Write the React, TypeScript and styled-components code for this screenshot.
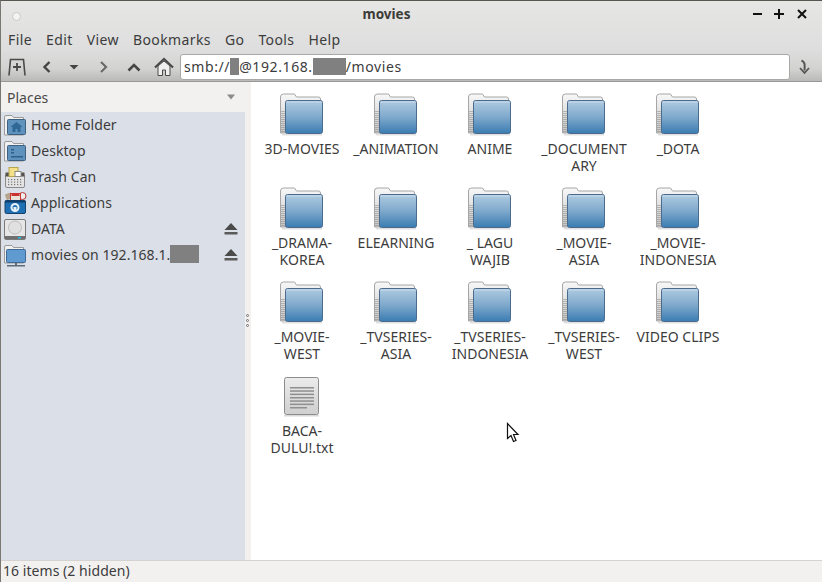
import React from "react";
import styled, { createGlobalStyle } from "styled-components";

const GlobalStyle = createGlobalStyle`
  html, body { margin: 0; padding: 0; height: 100%; background: #fff; }
  body { font-family: "Noto Sans", "Open Sans", "DejaVu Sans", sans-serif; color: #3c3c3c; overflow: hidden; }
`;

const Window = styled.div`
  position: relative;
  width: 822px;
  height: 582px;
  display: flex;
  flex-direction: column;
  box-sizing: border-box;
  border-top: 1px solid #5a5753;
  border-left: 1px solid #7a7773;
  overflow: hidden;
  background: #f2f1f0;
`;

const Chrome = styled.div`
  height: 81px;
  flex: none;
  box-sizing: border-box;
  display: flex;
  flex-direction: column;
  background: linear-gradient(#e6e6e5 0%, #dedede 60%, #d2d2d1 85%, #b9b9b8 100%);
  border-bottom: 1px solid #9a9997;
`;

const TitleBar = styled.div`
  height: 26px;
  display: flex;
  align-items: center;
  padding: 0 14px 0 11px;
`;

const CloseDot = styled.div`
  width: 7px;
  height: 7px;
  border-radius: 50%;
  background: #f4f4f4;
  border: 1px solid #c9c9c9;
  margin-top: 5px;
`;

const Title = styled.div`
  flex: 1;
  text-align: center;
  font-size: 13.5px;
  font-weight: 700;
  color: #3c3b37;
`;

const WindowButtons = styled.div`
  display: flex;
  gap: 10px;
  align-items: center;
`;

const MenuBar = styled.nav`
  height: 25px;
  display: flex;
  align-items: center;
  padding-left: 7px;
  gap: 14px;
  font-size: 14px;
`;

const MenuItem = styled.span`
  color: #3c3c3c;
  letter-spacing: 0.4px;
`;

const Toolbar = styled.div`
  height: 29px;
  display: flex;
  align-items: center;
  padding-left: 6px;
`;

const ToolSlot = styled.div<{ $w: number; $ml?: number }>`
  width: ${(p) => p.$w}px;
  margin-left: ${(p) => p.$ml ?? 0}px;
  flex: none;
  display: flex;
  justify-content: center;
  align-items: center;
`;

const Address = styled.div`
  width: 610px;
  height: 26px;
  flex: none;
  box-sizing: border-box;
  margin-left: 1px;
  background: #fff;
  border: 1px solid #a8a8a6;
  border-radius: 3px;
  display: flex;
  align-items: center;
  padding-left: 3px;
  font-size: 14px;
  color: #3c3c3c;
  letter-spacing: 0.6px;
  white-space: pre;
`;

const Redacted = styled.span<{ $w: number; $h: number }>`
  display: inline-block;
  width: ${(p) => p.$w}px;
  height: ${(p) => p.$h}px;
  background: #808080;
  flex: none;
`;

const Body = styled.div`
  flex: 1;
  min-height: 0;
  display: flex;
`;

const Side = styled.aside`
  width: 244px;
  flex: none;
  display: flex;
  flex-direction: column;
  background: #f2f1f0;
`;

const PlacesHead = styled.div`
  height: 30px;
  flex: none;
  box-sizing: border-box;
  display: flex;
  align-items: center;
  justify-content: space-between;
  padding: 0 9px 0 6px;
  font-size: 14px;
  color: #4a4a4a;
`;

const PlacesList = styled.ul`
  flex: 1;
  margin: 0;
  padding: 0;
  list-style: none;
  background: #dbdfe7;
`;

const PlaceRow = styled.li`
  height: 26px;
  box-sizing: border-box;
  display: flex;
  align-items: center;
  font-size: 14px;
  color: #3c3c3c;
  padding: 0 6px 0 3px;
  white-space: nowrap;
  letter-spacing: 0.05px;
`;

const PlaceIcon = styled.span`
  width: 24px;
  height: 24px;
  flex: none;
  margin-right: 3px;
`;

const PlaceLabel = styled.span`
  flex: 1;
  display: flex;
  align-items: center;
  margin-top: -2px;
`;

const Handle = styled.div`
  width: 6px;
  flex: none;
  box-sizing: border-box;
  background: #f2f1f0;
  display: flex;
  flex-direction: column;
  justify-content: center;
  align-items: flex-start;
  gap: 2px;
  padding: 0 0 2px 1px;
`;

const HandleDot = styled.span`
  width: 3px;
  height: 3px;
  border-radius: 50%;
  background: #f2f1f0;
  border: 0.5px solid #6f6f6f;
  box-sizing: border-box;
`;

const Files = styled.main`
  flex: 1;
  background: #fff;
  display: grid;
  grid-template-columns: repeat(5, 94px);
  grid-auto-rows: 94px;
  align-content: start;
  padding: 9px 0 0 4px;
`;

const Cell = styled.div`
  display: flex;
  flex-direction: column;
  align-items: center;
`;

const CellIcon = styled.div`
  width: 48px;
  height: 48px;
  flex: none;
`;

const CellLabel = styled.div`
  width: 94px;
  margin-top: 1px;
  text-align: center;
  font-size: 14px;
  line-height: 17px;
  color: #3c3c3c;
  white-space: pre-line;
`;

const StatusBar = styled.footer`
  height: 22px;
  flex: none;
  box-sizing: border-box;
  border-top: 1px solid #d4d3d1;
  background: #f2f1f0;
  display: flex;
  align-items: center;
  padding: 0 0 2px 2px;
  font-size: 14px;
  color: #3c3c3c;
  letter-spacing: 0.05px;
`;

const Pointer = styled.svg`
  position: absolute;
  left: 505px;
  top: 421px;
`;

const Defs = () => (
  <svg width="0" height="0" style={{ position: "absolute" }}>
    <defs>
      <linearGradient id="folderFront" x1="0" y1="0" x2="0" y2="1">
        <stop offset="0" stopColor="#afcbe1" />
        <stop offset="0.5" stopColor="#7fa9cc" />
        <stop offset="1" stopColor="#3a7cb2" />
      </linearGradient>
      <linearGradient id="folderBack" x1="0" y1="0" x2="0" y2="1">
        <stop offset="0" stopColor="#f8f8f8" />
        <stop offset="1" stopColor="#c4c4c4" />
      </linearGradient>
      <linearGradient id="docFill" x1="0" y1="0" x2="0" y2="1">
        <stop offset="0" stopColor="#ececec" />
        <stop offset="1" stopColor="#cfcfcf" />
      </linearGradient>
    </defs>
  </svg>
);

const FolderIcon = () => (
  <svg width={48} height={48} viewBox="0 0 48 48">
    <path
      d="M2.5 42V6a3 3 0 0 1 3-3h11l2 3h22a2 2 0 0 1 2 2v4H8v30z"
      fill="url(#folderBack)"
      stroke="#a6a6a6"
    />
    <path d="M5 20v22" stroke="#8f8f8f" strokeWidth="4" strokeDasharray="1 1" opacity="0.55" />
    <rect x="7.5" y="9.500" width="37" height="33" rx="2" fill="url(#folderFront)" stroke="#4a6b8c" />
    <rect x="8.500" y="10.500" width="35" height="1" fill="#c9dcec" />
    <rect x="4" y="43" width="40" height="1.500" fill="#000" opacity="0.12" />
  </svg>
);

const TextFileIcon = () => (
  <svg width="48" height="48" viewBox="0 0 48 48">
    <rect x="6.500" y="4.500" width="34" height="37" rx="2" fill="url(#docFill)" stroke="#8c8c8c" />
    <rect x="6" y="42" width="35" height="1.500" fill="#000" opacity="0.15" />
    {[14, 17.3, 20.6, 24, 27.3, 30.6, 34].map((y, i) => (
      <rect key={y} x="12" y={y} width={i === 6 ? 17 : 24} height="1.500" fill="#8f8f8f" />
    ))}
  </svg>
);

const FolderBack = () => (
  <path d="M0.500 22V4a1.500 1.500 0 0 1 1.500-1.500h6l1.500 2h10V22z" fill="#f0f0f0" stroke="#9a9a9a" />
);

const HomeIcon = () => (
  <svg width="24" height="24" viewBox="0 0 24 24">
    <FolderBack />
    <rect x="3.500" y="6.500" width="18" height="15" rx="1" fill="#5f93bd" stroke="#3f5f80" />
    <path d="M6.500 14l6-5 6 5h-2v5h-3v-3h-2v3h-3v-5z" fill="#2f6795" />
  </svg>
);

const DesktopIcon = () => (
  <svg width="24" height="24" viewBox="0 0 24 24">
    <FolderBack />
    <rect x="3.500" y="6.500" width="18" height="15" rx="1" fill="#5f93bd" stroke="#3f5f80" />
    <rect x="7" y="17" width="12" height="1.500" fill="#2f5f8a" />
    <rect x="7" y="10" width="3" height="1.500" fill="#2f5f8a" />
    <rect x="7" y="13" width="3" height="1.500" fill="#2f5f8a" />
  </svg>
);

const TrashIcon = () => (
  <svg width="24" height="24" viewBox="0 0 24 24">
    <rect x="1.500" y="9.500" width="19" height="13" rx="1.500" fill="#e4e4e4" stroke="#8a8a8a" />
    <rect x="1.500" y="7.500" width="19" height="4" fill="#55524d" />
    <rect x="5" y="2.500" width="9" height="9" fill="#f5e08a" stroke="#b8a64f" />
    <rect x="11" y="6.500" width="6" height="5" fill="#fff" stroke="#8a8a8a" />
    {[14, 16.500, 19].map((y) =>
      [4, 7, 10, 13, 16].map((x) => <rect key={`${x}-${y}`} x={x} y={y} width="1.200" height="1.200" fill="#777" />)
    )}
  </svg>
);

const AppsIcon = () => (
  <svg width="24" height="24" viewBox="0 0 24 24">
    <rect x="1.500" y="2.500" width="6" height="6" fill="#b5a58c" transform="rotate(-20 4 5)" />
    <circle cx="18.500" cy="5" r="3.500" fill="#eee" stroke="#b33" />
    <rect x="6.500" y="2.500" width="10" height="7" fill="#e8e2d8" stroke="#c33" />
    <rect x="7.500" y="3" width="8" height="2" fill="#c93030" />
    <rect x="1" y="9.500" width="20.500" height="13" rx="1.500" fill="#1f6fb4" stroke="#16426e" />
    <rect x="1" y="9.500" width="20.500" height="2" fill="#0f3e6d" />
    <circle cx="11" cy="16.500" r="3.500" fill="none" stroke="#e6f1fa" strokeWidth="2" />
    <rect x="9.500" y="16" width="3" height="3" fill="#e6f1fa" />
  </svg>
);

const DriveIcon = () => (
  <svg width="24" height="24" viewBox="0 0 24 24">
    <rect x="0.500" y="2.500" width="21" height="20" rx="1.500" fill="#e6e6e6" stroke="#7a7a7a" />
    <rect x="1" y="19" width="20" height="3" fill="#6f6f6f" />
    <circle cx="11" cy="10.500" r="6.500" fill="#e0e0e0" stroke="#bdbdbd" />
    <rect x="14" y="20" width="3" height="1.500" fill="#21c4e8" />
  </svg>
);

const NetworkIcon = () => (
  <svg width="24" height="24" viewBox="0 0 24 24">
    <path d="M0.500 20V4a1.500 1.500 0 0 1 1.500-1.500h6l1.500 2h10V20z" fill="#f0f0f0" stroke="#9a9a9a" />
    <rect x="2.500" y="6.500" width="19" height="13" rx="1" fill="#5f9bd0" stroke="#3f6a96" />
    <rect x="11" y="20" width="2" height="2" fill="#667" />
    <rect x="3" y="22" width="18" height="1.500" fill="#5a6a7a" />
  </svg>
);

const EjectIcon = () => (
  <svg width="16" height="14" viewBox="0 0 16 14">
    <path d="M8 1l6.500 7h-13z" fill="#4a4a4a" />
    <rect x="1.500" y="10" width="13" height="2.500" fill="#5a5a5a" />
  </svg>
);

const ToolIcon = ({ children, w = 16, h = 16 }: { children: React.ReactNode; w?: number; h?: number }) => (
  <svg width={w} height={h} viewBox={`0 0 ${w} ${h}`}>
    {children}
  </svg>
);

const menus = ["File", "Edit", "View", "Bookmarks", "Go", "Tools", "Help"];

const files = [
  "3D-MOVIES", "_ANIMATION", "ANIME", "_DOCUMENT\nARY", "_DOTA",
  "_DRAMA-\nKOREA", "ELEARNING", "_ LAGU\nWAJIB", "_MOVIE-\nASIA", "_MOVIE-\nINDONESIA",
  "_MOVIE-\nWEST", "_TVSERIES-\nASIA", "_TVSERIES-\nINDONESIA", "_TVSERIES-\nWEST", "VIDEO CLIPS",
];

const places: { label: React.ReactNode; icon: React.ReactNode; eject?: boolean }[] = [
  { label: "Home Folder", icon: <HomeIcon /> },
  { label: "Desktop", icon: <DesktopIcon /> },
  { label: "Trash Can", icon: <TrashIcon /> },
  { label: "Applications", icon: <AppsIcon /> },
  { label: "DATA", icon: <DriveIcon />, eject: true },
  { label: <>movies on 192.168.1.<Redacted $w={29} $h={18} /></>, icon: <NetworkIcon />, eject: true },
];

export default function App() {
  return (
    <>
      <GlobalStyle />
      <Defs />
      <Window>
        <Chrome>
          <TitleBar>
            <CloseDot />
            <Title>movies</Title>
            <WindowButtons>
              <ToolIcon w={12} h={12}><rect x="1" y="5" width="9" height="2" fill="#111" /></ToolIcon>
              <ToolIcon w={12} h={12}><path d="M0 5h4V1h2v4h4v2H6v4H4V7H0z" fill="#111" /></ToolIcon>
              <ToolIcon w={12} h={12}><path d="M2 2l8 8M10 2l-8 8" stroke="#111" strokeWidth="2" /></ToolIcon>
            </WindowButtons>
          </TitleBar>
          <MenuBar>
            {menus.map((m) => <MenuItem key={m}>{m}</MenuItem>)}
          </MenuBar>
          <Toolbar>
            <ToolSlot $w={20}>
              <ToolIcon w={20} h={20}>
                <path d="M2 18.500l1.500-16h13l1.500 16" fill="none" stroke="#4a4a4a" strokeWidth="1.600" />
                <path d="M6 10h8M10 6v8" stroke="#4a4a4a" strokeWidth="1.800" />
              </ToolIcon>
            </ToolSlot>
            <ToolSlot $w={24} $ml={8}>
              <ToolIcon w={12} h={14}><path d="M8.500 2L3.500 7l5 5" fill="none" stroke="#454545" strokeWidth="2.400" /></ToolIcon>
            </ToolSlot>
            <ToolSlot $w={30}>
              <ToolIcon w={10} h={8}><path d="M0.500 2h9L5 6.500z" fill="#454545" /></ToolIcon>
            </ToolSlot>
            <ToolSlot $w={30}>
              <ToolIcon w={12} h={14}>
                <path d="M3 2l5 5-5 5" fill="none" stroke="#6a6a6a" strokeWidth="2.200" />
                <path d="M2.800 4l3 3-3 3" fill="none" stroke="#dcdcdc" strokeWidth="0.800" />
              </ToolIcon>
            </ToolSlot>
            <ToolSlot $w={30}>
              <ToolIcon w={14} h={10}><path d="M1.500 8.500L7 3l5.500 5.500" fill="none" stroke="#454545" strokeWidth="2.600" /></ToolIcon>
            </ToolSlot>
            <ToolSlot $w={30}>
              <ToolIcon w={20} h={20}>
                <path d="M1 10.500L10 2l9 8.500" fill="none" stroke="#4a4a4a" strokeWidth="2.200" />
                <path d="M4 9v9.500h4.500V13h3v5.500H16V9L10 4z" fill="#efefef" stroke="#4a4a4a" />
              </ToolIcon>
            </ToolSlot>
            <Address>
              smb://<Redacted $w={9} $h={17} />@192.168.<Redacted $w={33} $h={17} />/movies
            </Address>
            <ToolSlot $w={27}>
              <ToolIcon w={12} h={16}>
                <path d="M3.500 1.500c3.500 1.500 3.500 4 3 10" fill="none" stroke="#555" strokeWidth="2" />
                <path d="M2 9l4.500 5 4.500-5" fill="none" stroke="#555" strokeWidth="1.800" />
              </ToolIcon>
            </ToolSlot>
          </Toolbar>
        </Chrome>
        <Body>
          <Side>
            <PlacesHead>
              Places
              <ToolIcon w={10} h={8}><path d="M1 1.500h8L5 6.500z" fill="#8a8a8a" /></ToolIcon>
            </PlacesHead>
            <PlacesList>
              {places.map((p, i) => (
                <PlaceRow key={i}>
                  <PlaceIcon>{p.icon}</PlaceIcon>
                  <PlaceLabel>{p.label}</PlaceLabel>
                  {p.eject && <EjectIcon />}
                </PlaceRow>
              ))}
            </PlacesList>
          </Side>
          <Handle>
            <HandleDot />
            <HandleDot />
            <HandleDot />
          </Handle>
          <Files>
            {files.map((f) => (
              <Cell key={f}>
                <CellIcon><FolderIcon /></CellIcon>
                <CellLabel>{f}</CellLabel>
              </Cell>
            ))}
            <Cell>
              <CellIcon><TextFileIcon /></CellIcon>
              <CellLabel>{"BACA-\nDULU!.txt"}</CellLabel>
            </Cell>
          </Files>
        </Body>
        <StatusBar>16 items (2 hidden)</StatusBar>
        <Pointer width="14" height="22" viewBox="0 0 14 22">
          <path d="M1.500 1.500v15l3.500-3 2.500 6 2.500-1-2.500-6h4.500z" fill="#fff" stroke="#111" strokeWidth="1.200" />
        </Pointer>
      </Window>
    </>
  );
}
